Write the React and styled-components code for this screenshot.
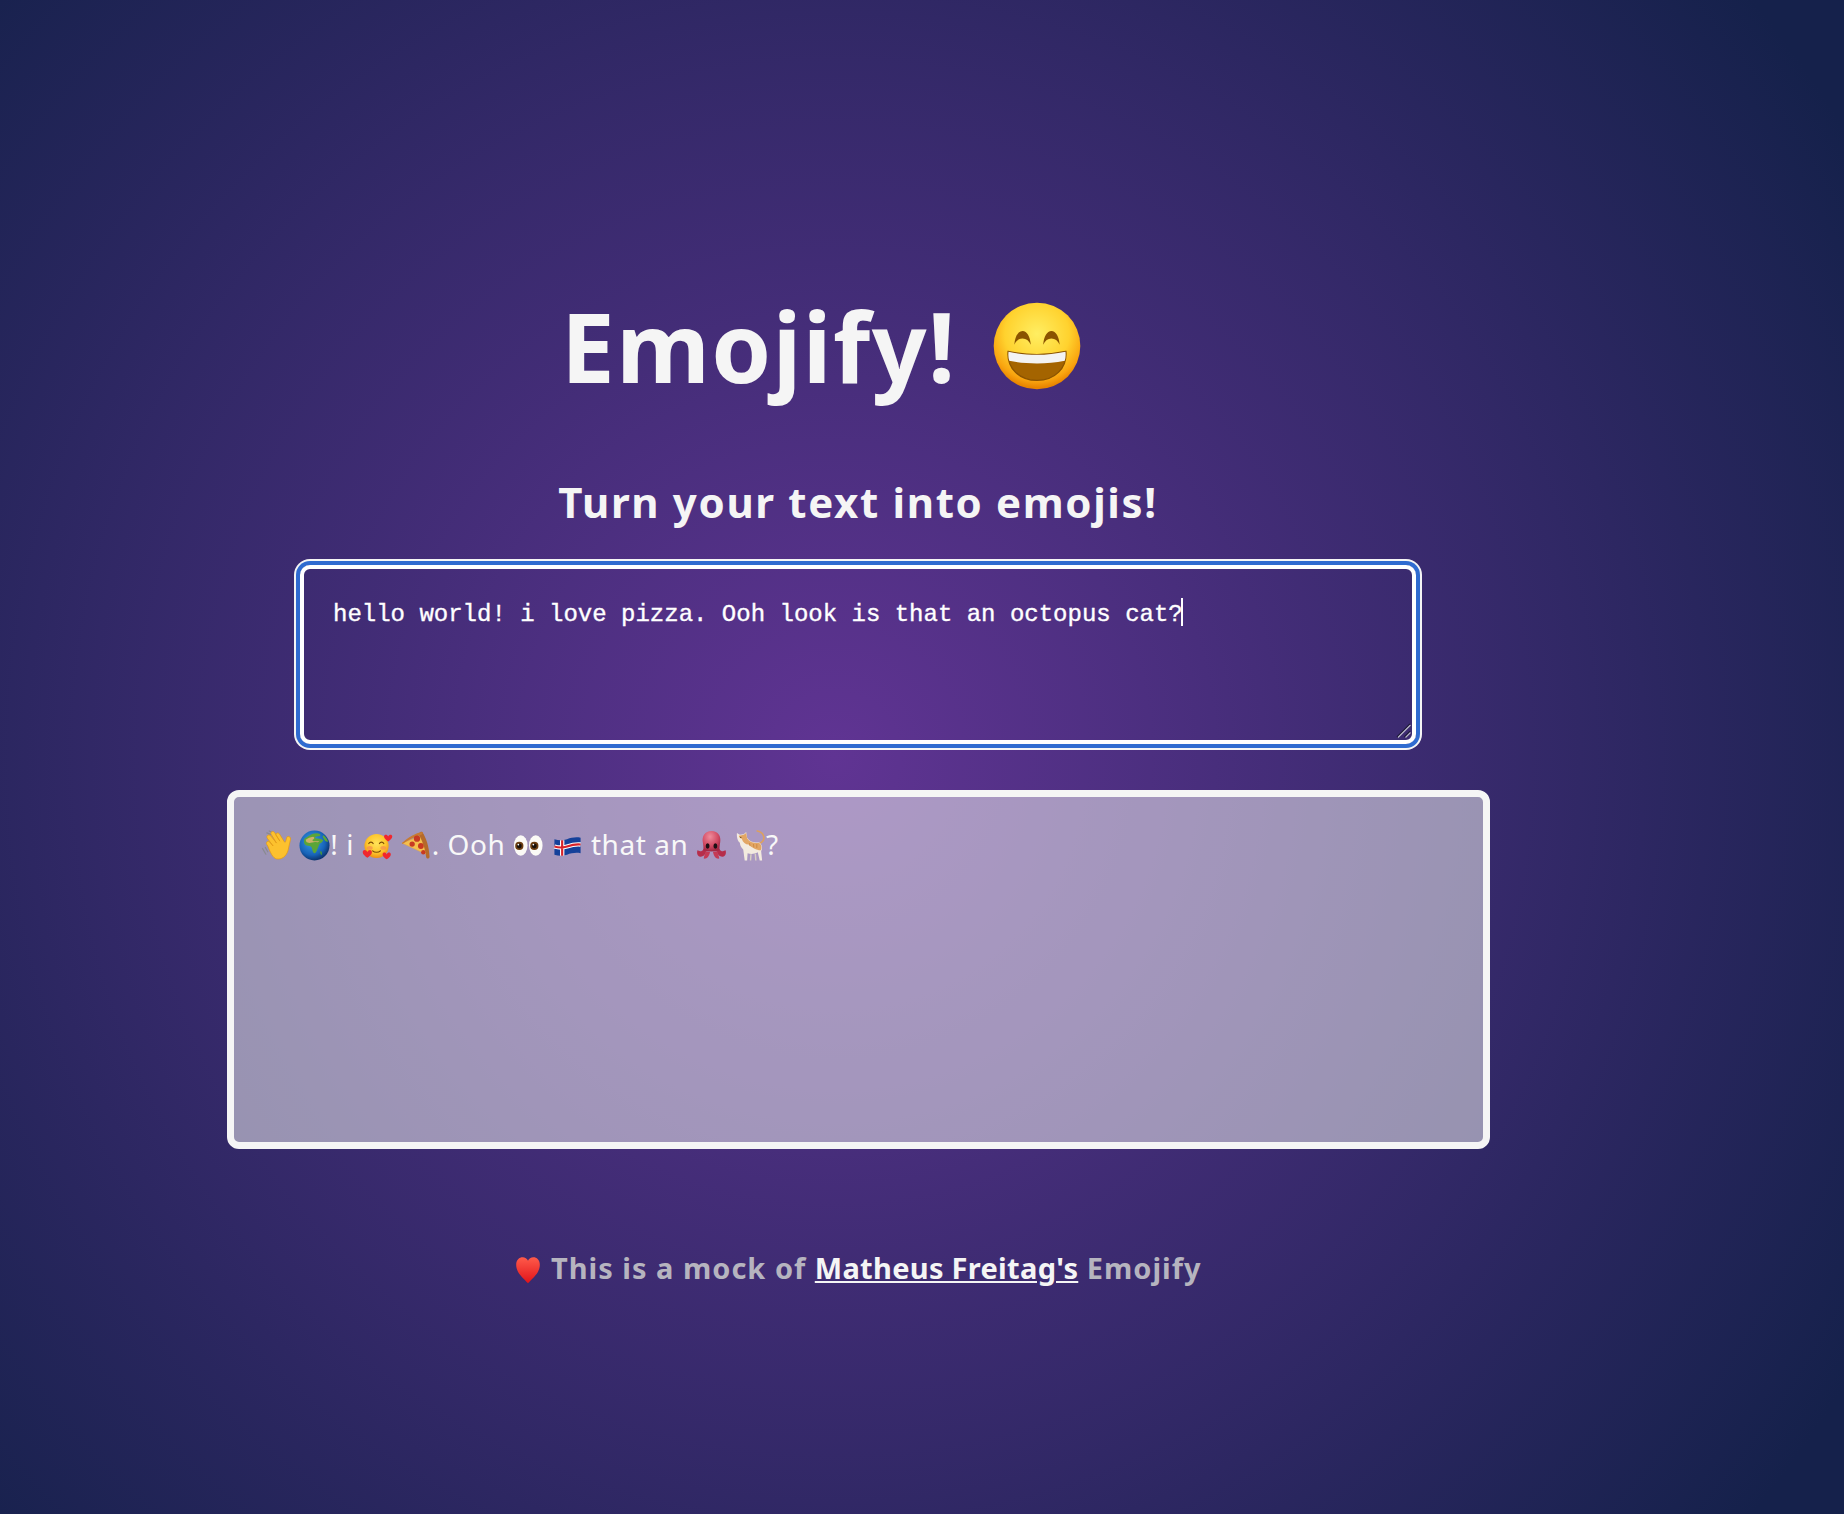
import React from "react";
import styled, { createGlobalStyle } from "styled-components";

const Global = createGlobalStyle`
  html, body { margin: 0; padding: 0; }
  body {
    min-height: 1514px;
    background: radial-gradient(circle 1190px at 835px 757px, #603493 0%, #15214b 100%);
    font-family: "Noto Sans", "DejaVu Sans", sans-serif;
    color: #f5f5f5;
  }
`;

const Page = styled.main`
  width: 1716px;
  padding-top: 291px;
  display: flex;
  flex-direction: column;
  align-items: center;
`;

const Title = styled.h1`
  margin: 0 74px 0 0;
  height: 110px;
  display: flex;
  align-items: center;
  font-size: 96px;
  line-height: 110px;
  font-weight: 700;
  letter-spacing: 1.5px;
  color: #f5f5f5;
`;

const TitleEmoji = styled.span`
  display: inline-flex;
  margin-left: 10px;
`;

const Subtitle = styled.h2`
  margin: 73px 0 0;
  font-size: 42px;
  line-height: 56px;
  font-weight: 700;
  letter-spacing: 1.65px;
  color: #f5f5f5;
`;

const InputWrap = styled.div`
  position: relative;
  margin-top: 35px;
  width: 1116px;
  height: 179px;
  border-radius: 10px;
  box-shadow: 0 0 0 4px #2f6bd0, 0 0 0 6px #f5f5f5;
`;

const Input = styled.textarea`
  display: block;
  box-sizing: border-box;
  width: 100%;
  height: 100%;
  margin: 0;
  padding: 32px 29px;
  border: 4px solid #fff;
  border-radius: 10px;
  outline: none;
  background: transparent;
  color: #fff;
  font-family: "Liberation Mono", monospace;
  font-size: 24px;
  line-height: 27px;
  font-weight: 400;
  -webkit-text-stroke: 0.35px #fff;
  resize: none;
`;

const Caret = styled.span`
  position: absolute;
  left: 881px;
  top: 33px;
  width: 2px;
  height: 28px;
  background: #fff;
`;

const Grip = styled.svg`
  position: absolute;
  right: 5px;
  bottom: 6px;
  width: 16px;
  height: 16px;
`;

const Output = styled.div`
  box-sizing: border-box;
  margin-top: 46px;
  width: 1263px;
  height: 359px;
  padding: 28px 27px;
  border: 7px solid #f5f5f5;
  border-radius: 12px;
  background: rgba(245, 245, 245, 0.52);
  color: #f8f8f8;
  font-size: 28px;
  line-height: 38px;
  letter-spacing: 0.55px;
`;

const Footer = styled.p`
  margin: 99px 0 0;
  font-size: 29px;
  line-height: 40px;
  font-weight: 700;
  letter-spacing: 1px;
  color: #b6b4bf;
`;

const FooterLink = styled.a`
  color: #f5f5f5;
  letter-spacing: 0.3px;
  text-decoration: underline;
`;

const Glyph = styled.svg`
  display: inline-block;
  width: ${(p) => p.$size}px;
  height: ${(p) => p.$size}px;
  vertical-align: ${(p) => p.$drop}px;
`;

const Emoji = ({ size = 31, drop = -6, label, children }) => (
  <Glyph $size={size} $drop={drop} viewBox="0 0 64 64" role="img" aria-label={label}>
    {children}
  </Glyph>
);

const Grin = (p) => (
  <Emoji label="grinning face" {...p}>
    <defs>
      <radialGradient id="grinFace" cx="50%" cy="36%" r="62%">
        <stop offset="0%" stopColor="#ffee62" />
        <stop offset="60%" stopColor="#ffd22e" />
        <stop offset="88%" stopColor="#f9a40f" />
        <stop offset="100%" stopColor="#e98500" />
      </radialGradient>
    </defs>
    <circle cx="32" cy="32" r="31.5" fill="url(#grinFace)" />
    <path d="M15.500 31c.5-6 2.800-10 6-10s5.500 4 6 10c-1.500-3-3.300-4.500-6-4.500s-4.500 1.500-6 4.500z" fill="#8a5300" />
    <path d="M36.500 31c.5-6 2.800-10 6-10s5.500 4 6 10c-1.500-3-3.300-4.500-6-4.500s-4.500 1.500-6 4.500z" fill="#8a5300" />
    <path d="M11 36c14 3 28 3 42 0 1 12-8 21-21 21S10 48 11 36z" fill="#a46400" stroke="#8a5300" strokeWidth="1" />
    <path d="M11.300 36.200c14 3 27.400 3 41.400 0 .3 2.300.1 4.600-.5 6.600-13 2.500-27.400 2.500-40.400 0-.6-2-.8-4.300-.5-6.600z" fill="#f3f3f3" />
  </Emoji>
);

const Hand = (p) => (
  <Emoji label="waving hand" {...p}>
    <path d="M3 38l7 12M9 36l5 9M12 6l8 3M17 2l6 3" stroke="#8a8a90" strokeWidth="2.500" strokeLinecap="round" fill="none" />
    <path
      d="M14 33 L12 30 C9 25 15 21 18 25 L25 33 L13 17 C10 12 16 8 20 12 L32 27 L21 9 C18 4 25 1 28 5 L39 23 L31 11 C29 7 35 4 38 8 L48 24 C49 26 51 25 51 23 L53 16 C54 11 62 13 61 19 L57 37 C55 50 47 60 35 60 C27 60 22 54 14 33 Z"
      fill="#fcc12e"
      stroke="#e59a12"
      strokeWidth="1.500"
    />
  </Emoji>
);

const Globe = (p) => (
  <Emoji label="globe" {...p}>
    <defs>
      <radialGradient id="globeSea" cx="42%" cy="38%" r="62%">
        <stop offset="0%" stopColor="#3aa0e8" />
        <stop offset="70%" stopColor="#1763b8" />
        <stop offset="100%" stopColor="#0c3570" />
      </radialGradient>
    </defs>
    <circle cx="32" cy="32" r="31" fill="url(#globeSea)" />
    <path d="M12 17c6-3 10-7 15-9 5-1 12-2 16 0 3 2 0 5-4 5-4 0-7 2-5 4 4 1 12 1 16 4-1 3-4 5-7 7-2 3-3 7-5 11-1 4-3 7-5 9-3 1-5-4-6-9 0-3-2-5-5-6-5 0-9-1-11-5-1-4-1-8 1-11z" fill="#5aa538" />
    <path d="M14 20c4-3 9-5 15-6 4 1 3 3 1 5-3 1-3 3 0 4 4 0 9 1 12 0-2 3-5 2-9 2-5 0-11 3-15 1-3-1-4-4-4-6z" fill="#cdb06a" />
    <path d="M50 11c4 2 8 7 10 13-3 1-7-2-9-6-2-3-3-5-1-7z" fill="#5aa538" />
    <path d="M44 44c3-1 4 3 3 7-2 2-4-4-3-7z" fill="#4c9a34" />
  </Emoji>
);

const Heart = ({ x, y, s = 1 }) => (
  <path
    transform={`translate(${x} ${y}) scale(${s})`}
    d="M0 4C-2-2-10-2-10 4c0 5 6 9 10 12 4-3 10-7 10-12C10-2 2-2 0 4z"
    fill="#f0272e"
  />
);

const LoveFace = (p) => (
  <Emoji label="smiling face with hearts" {...p}>
    <defs>
      <radialGradient id="loveFace" cx="50%" cy="40%" r="60%">
        <stop offset="0%" stopColor="#ffe35a" />
        <stop offset="65%" stopColor="#fdc62c" />
        <stop offset="100%" stopColor="#ef8f10" />
      </radialGradient>
    </defs>
    <circle cx="30" cy="33" r="25" fill="url(#loveFace)" />
    <ellipse cx="16" cy="37" rx="6" ry="4" fill="#f78b50" opacity="0.7" />
    <ellipse cx="44" cy="37" rx="6" ry="4" fill="#f78b50" opacity="0.7" />
    <path d="M14 28c2-4 7-4 9 0M36 28c2-4 7-4 9 0M22 43c4 4 12 4 16 0" stroke="#7a4a05" strokeWidth="2.400" fill="none" strokeLinecap="round" />
    <Heart x={54} y={10} s={0.85} />
    <Heart x={11} y={42} s={0.95} />
    <Heart x={51} y={47} s={0.85} />
  </Emoji>
);

const Pizza = (p) => (
  <Emoji label="pizza" {...p}>
    <path d="M2 27 L45 11 L56 52 Z" fill="#f4c04e" />
    <path d="M2 27 L45 11 L56 52 Z" fill="none" stroke="#e8a33a" strokeWidth="1" />
    <path d="M44 4c8 12 14 30 15 52-2 4-6 3-7 0-2-15-6-30-14-44C35 8 40 2 44 4z" fill="#b56a2a" />
    <path d="M2 27C15 15 30 6 44 4c2 1 1 4-2 6C28 14 14 22 3 29z" fill="#c77b32" />
    <circle cx="33" cy="18" r="6.500" fill="#c83a22" />
    <circle cx="23" cy="29" r="5.500" fill="#c83a22" />
    <circle cx="41" cy="33" r="6" fill="#c83a22" />
    <circle cx="46" cy="46" r="4.500" fill="#c83a22" />
  </Emoji>
);

const Eyes = (p) => (
  <Emoji label="eyes" {...p}>
    <ellipse cx="16" cy="32" rx="14" ry="21" fill="#fbfaf6" />
    <ellipse cx="47" cy="32" rx="14" ry="21" fill="#fbfaf6" />
    <circle cx="13" cy="33" r="8.500" fill="#6b3d10" />
    <circle cx="44" cy="33" r="8.500" fill="#6b3d10" />
    <circle cx="13" cy="33" r="5" fill="#17100a" />
    <circle cx="44" cy="33" r="5" fill="#17100a" />
    <circle cx="11" cy="30" r="1.800" fill="#fff" />
    <circle cx="42" cy="30" r="1.800" fill="#fff" />
  </Emoji>
);

const Flag = (p) => (
  <Emoji label="Iceland flag" {...p}>
    <path d="M5 19c9 3 17 3 26 0s18-5 28-3v32c-10-2-19 0-28 3s-17 3-26 0z" fill="#15419a" />
    <path d="M21 21v32M5 34c9 3 17 3 26 0s18-5 28-4" stroke="#fff" strokeWidth="9" fill="none" />
    <path d="M21 21v32M5 34c9 3 17 3 26 0s18-5 28-4" stroke="#d8232a" strokeWidth="4.500" fill="none" />
  </Emoji>
);

const Octopus = (p) => (
  <Emoji label="octopus" {...p}>
    <defs>
      <radialGradient id="octoBody" cx="42%" cy="28%" r="70%">
        <stop offset="0%" stopColor="#ef8b9b" />
        <stop offset="65%" stopColor="#d24a63" />
        <stop offset="100%" stopColor="#a42a45" />
      </radialGradient>
    </defs>
    <path d="M3 42c5 3 10 2 13-3l6 2c-2 8-4 14-13 14-6 0-8-7-6-13zM61 42c-5 3-10 2-13-3l-6 2c2 8 4 14 13 14 6 0 8-7 6-13z" fill="#b62e4b" />
    <path d="M20 44c-1 6-4 11-4 15 6 1 11-3 13-14zM44 44c1 6 4 11 4 15-6 1-11-3-13-14z" fill="#c53a55" />
    <path d="M32 2C18 2 12 13 14 25c1 8 2 12 1 17 5 3 29 3 34 0-1-5 0-9 1-17C52 13 46 2 32 2z" fill="url(#octoBody)" />
    <ellipse cx="24" cy="33" rx="4" ry="5.500" fill="#1c1014" />
    <ellipse cx="40" cy="33" rx="4" ry="5.500" fill="#1c1014" />
  </Emoji>
);

const Cat = (p) => (
  <Emoji label="cat" {...p}>
    <path d="M49 28C58 26 62 18 58 10C56 5 50 3 46 2" stroke="#dca060" strokeWidth="3.500" fill="none" strokeLinecap="round" />
    <path d="M4 6L10 10L18 9L23 4L25 16C30 24 38 26 50 26C56 30 57 38 54 44L56 63H51L47 46C40 50 32 50 26 48L25 63H20L17 40C12 36 10 30 10 26C6 24 3 14 4 6Z" fill="#f3ebdf" />
    <path d="M8 12L18 10L23 6L25 17C30 25 38 27 50 27C55 31 56 37 53 42C44 42 34 36 28 30C22 30 16 26 14 18C10 17 8 15 8 12Z" fill="#e2a664" />
    <path d="M30 27l1 6M38 29l1 7M45 29l0 8" stroke="#c9823c" strokeWidth="1.600" />
    <path d="M33 50l-1 13M42 49l1 14" stroke="#d8cfc2" strokeWidth="3" />
    <circle cx="12" cy="15" r="1.300" fill="#4a3418" />
  </Emoji>
);

const RedHeart = (p) => (
  <Emoji label="red heart" {...p}>
    <defs>
      <linearGradient id="redHeart" x1="0" y1="0" x2="0" y2="1">
        <stop offset="0%" stopColor="#ff5a4a" />
        <stop offset="100%" stopColor="#e0141a" />
      </linearGradient>
    </defs>
    <path d="M32 62C20 50 5 38 5 20 5 9 12 3 20 3c5 0 10 3 12 8 2-5 7-8 12-8 8 0 15 6 15 17 0 18-15 30-27 42z" fill="url(#redHeart)" />
  </Emoji>
);

export default function App() {
  return (
    <Page>
      <Global />
      <Title>
        Emojify!&nbsp;
        <TitleEmoji>
          <Grin size={88} drop={0} />
        </TitleEmoji>
      </Title>
      <Subtitle>Turn your text into emojis!</Subtitle>
      <InputWrap>
        <Input readOnly defaultValue="hello world! i love pizza. Ooh look is that an octopus cat?" />
        <Caret />
        <Grip viewBox="0 0 16 16" aria-hidden="true">
          <path d="M2 15L15 2M9.500 15L15 9.500" stroke="#17152e" strokeWidth="1.200" />
          <path d="M3 15.500L15.500 3M10.500 15.500L15.500 10.500" stroke="#b9b7c9" strokeWidth="1.200" />
        </Grip>
      </InputWrap>
      <Output>
        <Hand /> <Globe />! i <LoveFace /> <Pizza />. Ooh <Eyes /> <Flag /> that an <Octopus /> <Cat />?
      </Output>
      <Footer>
        <RedHeart size={28} drop={-5} /> This is a mock of <FooterLink href="#">Matheus Freitag's</FooterLink> Emojify
      </Footer>
    </Page>
  );
}
